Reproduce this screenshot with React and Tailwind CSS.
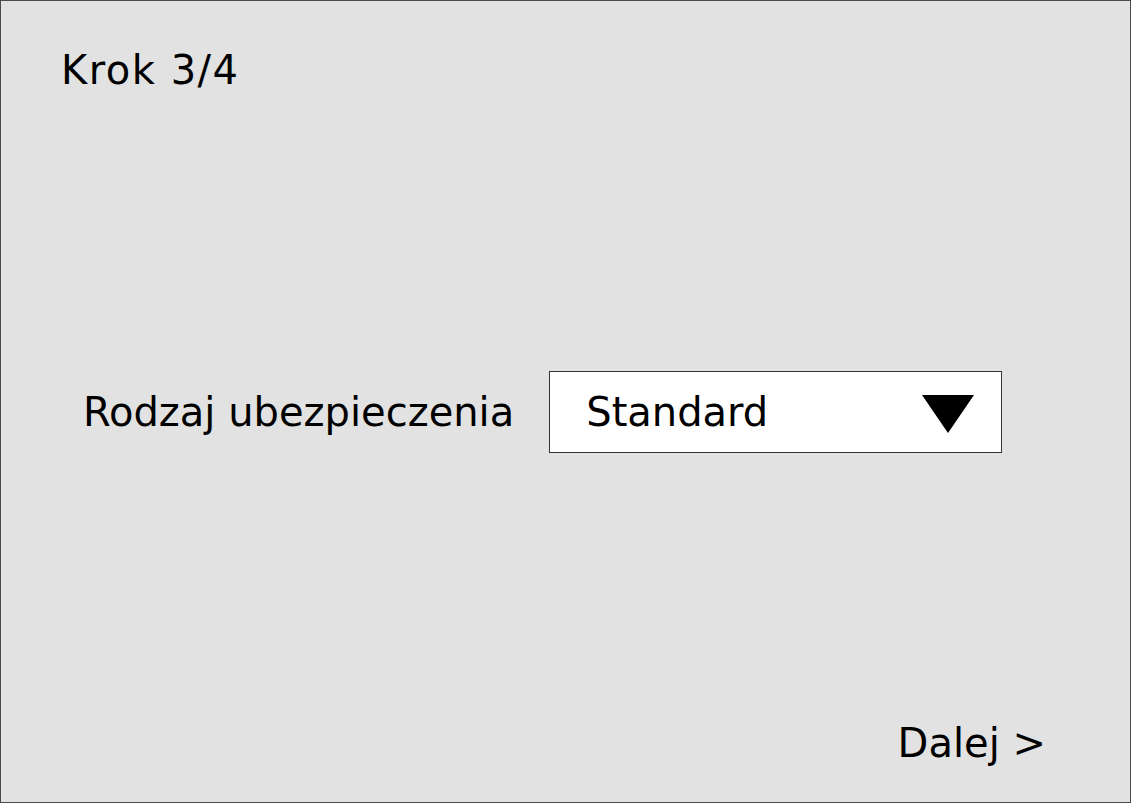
export default function App() {
  return (
    <div
      className="w-[1131px] h-[803px] bg-[#e1e2e1] border border-[#4a4a4a] flex flex-col text-black text-[40px] leading-[48px]"
      style={{ fontFamily: '"DejaVu Sans", Verdana, sans-serif' }}
    >
      {/* Header */}
      <div className="pt-[45px] pl-[60px] tracking-[1.5px]">Krok 3/4</div>

      {/* Form row */}
      <div className="flex-1 flex items-center pl-[82px] pt-[10px]">
        <span className="mr-[35px]">Rodzaj ubezpieczenia</span>
        <div className="w-[453px] h-[82px] bg-white border border-[#333] flex items-center pl-[36px] pr-[27px]">
          <span className="flex-1">Standard</span>
          <svg width="52" height="38" viewBox="0 0 52 38" className="mt-[4px]">
            <polygon points="0,0 52,0 26,38" fill="#000" />
          </svg>
        </div>
      </div>

      {/* Footer */}
      <div className="flex justify-end pr-[84px] pb-[35px]">
        <span>Dalej &gt;</span>
      </div>
    </div>
  );
}
